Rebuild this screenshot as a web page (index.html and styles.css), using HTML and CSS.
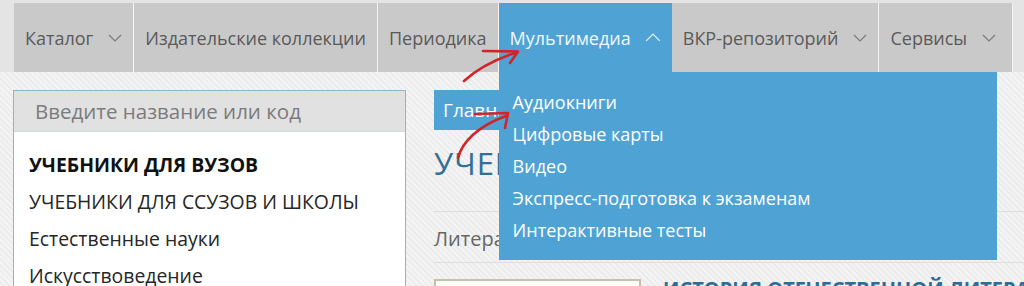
FILE: index.html
```html
<!DOCTYPE html>
<html lang="ru">
<head>
<meta charset="utf-8">
<title>Мультимедиа</title>
<link rel="stylesheet" href="styles.css">
</head>
<body>
<header class="header">
  <nav class="nav">
    <div class="nav-item">Каталог<svg class="chev" viewBox="0 0 14 8"><polyline points="1,1 7,7 13,1"/></svg></div>
    <div class="nav-item">Издательские коллекции</div>
    <div class="nav-item">Периодика</div>
    <div class="nav-item active">Мультимедиа<svg class="chev chev-up" viewBox="0 0 14 8"><polyline points="1,7 7,1 13,7"/></svg>
      <ul class="dropdown">
        <li>Аудиокниги</li>
        <li>Цифровые карты</li>
        <li>Видео</li>
        <li>Экспресс-подготовка к экзаменам</li>
        <li>Интерактивные тесты</li>
      </ul>
    </div>
    <div class="nav-item">ВКР-репозиторий<svg class="chev" viewBox="0 0 14 8"><polyline points="1,1 7,7 13,1"/></svg></div>
    <div class="nav-item nav-last">Сервисы<svg class="chev" viewBox="0 0 14 8"><polyline points="1,1 7,7 13,1"/></svg></div>
  </nav>
</header>
<main class="main">
  <aside class="side">
    <input class="search" type="text" placeholder="Введите название или код">
    <ul class="cats">
      <li class="cat-strong">УЧЕБНИКИ ДЛЯ ВУЗОВ</li>
      <li>УЧЕБНИКИ ДЛЯ ССУЗОВ И ШКОЛЫ</li>
      <li>Естественные науки</li>
      <li>Искусствоведение</li>
    </ul>
  </aside>
  <section class="content">
    <div class="crumbs"><span class="crumb">Главная</span></div>
    <h1 class="title">УЧЕБНИКИ ДЛЯ ВУЗОВ</h1>
    <div class="filter">Литература</div>
    <div class="book">
      <div class="cover"></div>
      <div class="book-title">ИСТОРИЯ ОТЕЧЕСТВЕННОЙ ЛИТЕРАТУРЫ</div>
    </div>
  </section>
</main>
<svg class="annot" viewBox="0 0 1024 286" width="1024" height="286">
  <path d="M464 81 C474 72, 488 62, 515 53"/>
  <path d="M483 51 L518 51.5 L510 63"/>
  <path d="M458 158 C462 142, 478 126, 506 116"/>
  <path d="M475 114 L508 113 L505 128"/>
</svg>
</body>
</html>
```
FILE: styles.css
```css
html, body {
  margin: 0;
  padding: 0;
  overflow: hidden;
}
body {
  font-family: "Open Sans", "Noto Sans", sans-serif;
  background: repeating-linear-gradient(45deg, #f4f4f4 0 2px, #ececec 2px 4px);
  position: relative;
  width: 1024px;
  height: 286px;
}
.header {
  background: #e4e4e4;
  padding: 3px 0 0 14px;
}
.nav {
  display: flex;
}
.nav-item {
  position: relative;
  display: flex;
  align-items: center;
  height: 69px;
  padding: 0 11px;
  background: #c9c9c9;
  border-right: 1px solid #f4f4f4;
  color: #5a5a5a;
  font-size: 18px;
  white-space: nowrap;
}
.nav-last {
  padding-right: 16px;
}
.chev {
  width: 14px;
  height: 8px;
  margin-left: 15px;
  fill: none;
  stroke: #7a7a7a;
  stroke-width: 1.2;
}
.nav-item.active {
  background: #4fa3d4;
  color: #f2f8fc;
  border-right: 0;
  padding-right: 10px;
}
.chev-up {
  width: 18px;
  height: 9px;
  margin-left: 13px;
  stroke: #e3f1fa;
}
.dropdown {
  position: absolute;
  top: 100%;
  left: 0;
  width: 498px;
  box-sizing: border-box;
  margin: 0;
  padding: 14px 0 14px 14px;
  list-style: none;
  background: #4fa3d4;
  z-index: 5;
}
.dropdown li {
  line-height: 32px;
  font-size: 18px;
  color: #ffffff;
}
.main {
  display: flex;
  gap: 28px;
  padding: 18px 0 0 13px;
}
.side {
  width: 393px;
  flex: none;
  box-sizing: border-box;
  border: 1px solid #8db5cc;
  background: #ffffff;
  height: 260px;
}
.search {
  display: block;
  width: 100%;
  box-sizing: border-box;
  height: 41px;
  border: 0;
  border-bottom: 1px solid #d3dadf;
  background: #e1e1e1;
  padding: 0 0 0 21px;
  font-family: "Open Sans", sans-serif;
  font-size: 20.5px;
  color: #555;
}
.search::placeholder {
  color: #7b7b7b;
}
.cats {
  list-style: none;
  margin: 0;
  padding: 14px 0 0 15px;
}
.cats li {
  font-size: 19.4px;
  line-height: 37px;
  color: #262626;
  white-space: nowrap;
}
.cats .cat-strong {
  font-weight: 700;
  color: #111;
}
.content {
  flex: 1;
  min-width: 0;
}
.crumbs {
  height: 40px;
}
.crumb {
  display: inline-block;
  height: 40px;
  line-height: 40px;
  padding: 0 9px;
  background: #4fa3d4;
  color: #ffffff;
  font-size: 19px;
}
.title {
  margin: 15px 0 30px 0;
  font-size: 31px;
  line-height: 36px;
  font-weight: 400;
  letter-spacing: 1px;
  color: #2f6f98;
  white-space: nowrap;
}
.filter {
  height: 50px;
  line-height: 54px;
  border-top: 1px solid #dddddd;
  border-bottom: 1px solid #dddddd;
  font-size: 20px;
  color: #666666;
}
.book {
  display: flex;
  gap: 22px;
  margin-top: 16px;
}
.cover {
  width: 207px;
  height: 150px;
  box-sizing: border-box;
  border: 2px solid #cbbfa9;
  background: #fdfdfb;
  flex: none;
}
.book-title {
  font-size: 20px;
  font-weight: 700;
  color: #2b6d96;
  white-space: nowrap;
  line-height: 24px;
  margin-top: -2px;
}
.annot {
  position: absolute;
  left: 0;
  top: 0;
  z-index: 10;
  pointer-events: none;
  fill: none;
  stroke: #d3232a;
  stroke-width: 2.6;
  stroke-linecap: round;
  stroke-linejoin: round;
}
```
